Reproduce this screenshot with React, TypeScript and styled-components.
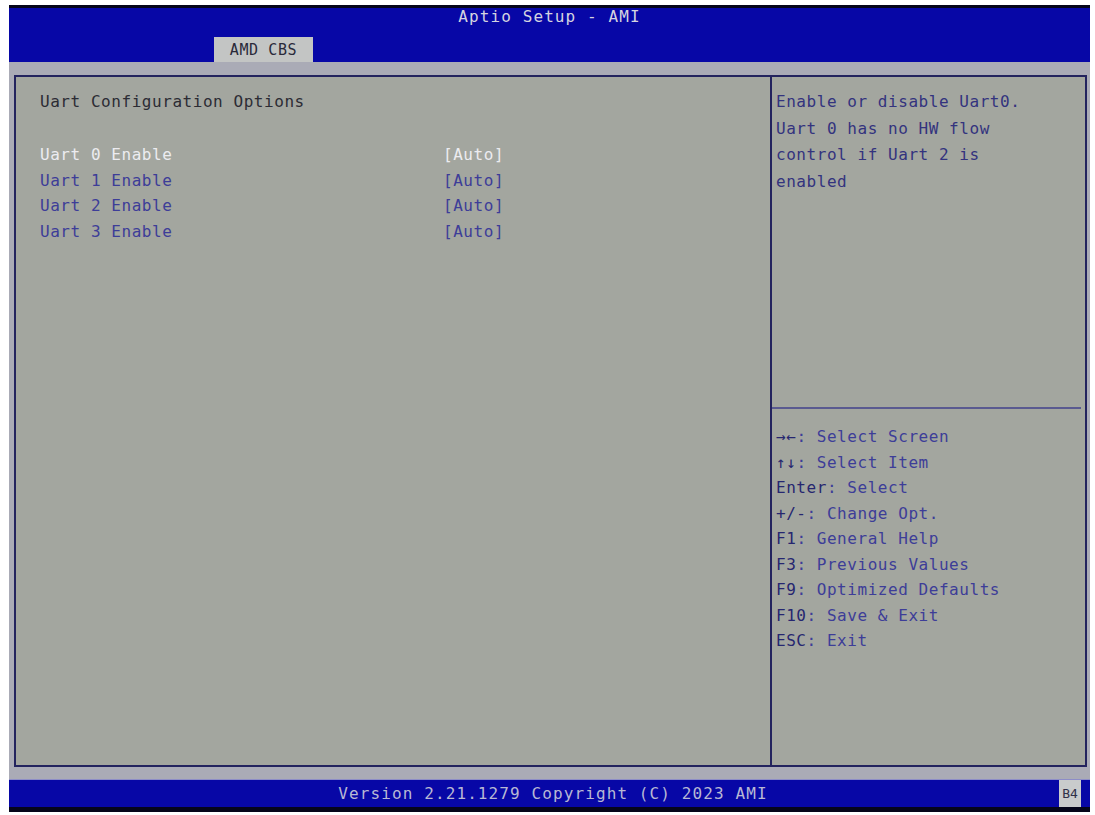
import React from "react";
import styled, { createGlobalStyle } from "styled-components";

const Global = createGlobalStyle`
  html, body { margin: 0; padding: 0; background: #ffffff; }
  body { font-family: "DejaVu Sans Mono", "Liberation Mono", monospace; }
`;

const Screen = styled.div`
  margin: 5px 0 0 9px;
  width: 1081px;
  height: 807px;
  display: flex;
  flex-direction: column;
  background: #aaabb6;
  font-family: "DejaVu Sans Mono", "Liberation Mono", monospace;
  font-size: 16px;
  letter-spacing: 0.55px;
`;

const Header = styled.div`
  height: 55px;
  border-top: 3px solid #05051a;
  background: #0707a6;
  display: flex;
  flex-direction: column;
  justify-content: space-between;
`;

const Title = styled.div`
  text-align: center;
  line-height: 18px;
  padding-top: 0;
  color: #d4d4e0;
  letter-spacing: 1.1px;
`;

const TabRow = styled.div`
  display: flex;
  padding-left: 205px;
`;

const Tab = styled.div`
  width: 99px;
  height: 25px;
  background: #c3c5c4;
  color: #2a2a3a;
  display: flex;
  align-items: center;
  justify-content: center;
  font-size: 15px;
  letter-spacing: 0.6px;
`;

const Body = styled.div`
  padding: 13px 3px 0 5px;
`;

const Panel = styled.div`
  height: 688px;
  border: 2px solid #23235e;
  display: grid;
  grid-template-columns: 756px 1fr;
  background: #a3a69f;
`;

const Main = styled.div`
  padding: 13px 0 0 24px;
  border-right: 2px solid #23235e;
`;

const Heading = styled.div`
  color: #2c2c34;
  line-height: 24px;
  margin-bottom: 28px;
`;

const Row = styled.div`
  display: grid;
  grid-template-columns: 403px 1fr;
  line-height: 25.6px;
`;

const Cell = styled.span<{ $selected?: boolean }>`
  color: ${(p) => (p.$selected ? "#ececf0" : "#3d3d98")};
`;

const Side = styled.div`
  display: flex;
  flex-direction: column;
`;

const HelpText = styled.div`
  height: 318px;
  padding: 12px 6px 0 4px;
  color: #33337e;
  line-height: 26.6px;
  border-bottom: 2px solid #5a5a90;
  margin-right: 4px;
`;

const Keys = styled.div`
  padding: 15px 0 0 4px;
  line-height: 25.5px;
`;

const KeyLine = styled.div`
  color: #3d3d98;
`;

const KeyName = styled.span`
  color: #262670;
`;

const Footer = styled.div`
  margin-top: 12px;
  height: 27px;
  border-top: 1px solid #8d8dc8;
  border-bottom: 5px solid #05051a;
  background: #0707a6;
  display: flex;
  align-items: center;
`;

const FooterText = styled.div`
  flex: 1;
  text-align: center;
  color: #b8b8d4;
  padding-left: 38px;
  letter-spacing: 1.1px;
`;

const Code = styled.div`
  width: 22px;
  height: 27px;
  margin-right: 9px;
  background: #c9cbcc;
  color: #30304a;
  font-size: 13px;
  letter-spacing: 0;
  display: flex;
  align-items: center;
  justify-content: center;
`;

const items = ["Uart 0 Enable", "Uart 1 Enable", "Uart 2 Enable", "Uart 3 Enable"];

const keys: [string, string][] = [
  ["\u2192\u2190", ": Select Screen"],
  ["\u2191\u2193", ": Select Item"],
  ["Enter", ": Select"],
  ["+/-", ": Change Opt."],
  ["F1", ": General Help"],
  ["F3", ": Previous Values"],
  ["F9", ": Optimized Defaults"],
  ["F10", ": Save & Exit"],
  ["ESC", ": Exit"],
];

export default function App() {
  return (
    <>
      <Global />
      <Screen>
        <Header>
          <Title>Aptio Setup - AMI</Title>
          <TabRow>
            <Tab>AMD CBS</Tab>
          </TabRow>
        </Header>
        <Body>
          <Panel>
            <Main>
              <Heading>Uart Configuration Options</Heading>
              {items.map((it, i) => (
                <Row key={it}>
                  <Cell $selected={i === 0}>{it}</Cell>
                  <Cell $selected={i === 0}>[Auto]</Cell>
                </Row>
              ))}
            </Main>
            <Side>
              <HelpText>
                Enable or disable Uart0.
                <br />
                Uart 0 has no HW flow
                <br />
                control if Uart 2 is
                <br />
                enabled
              </HelpText>
              <Keys>
                {keys.map(([k, v]) => (
                  <KeyLine key={k}>
                    <KeyName>{k}</KeyName>
                    {v}
                  </KeyLine>
                ))}
              </Keys>
            </Side>
          </Panel>
        </Body>
        <Footer>
          <FooterText>Version 2.21.1279 Copyright (C) 2023 AMI</FooterText>
          <Code>B4</Code>
        </Footer>
      </Screen>
    </>
  );
}
